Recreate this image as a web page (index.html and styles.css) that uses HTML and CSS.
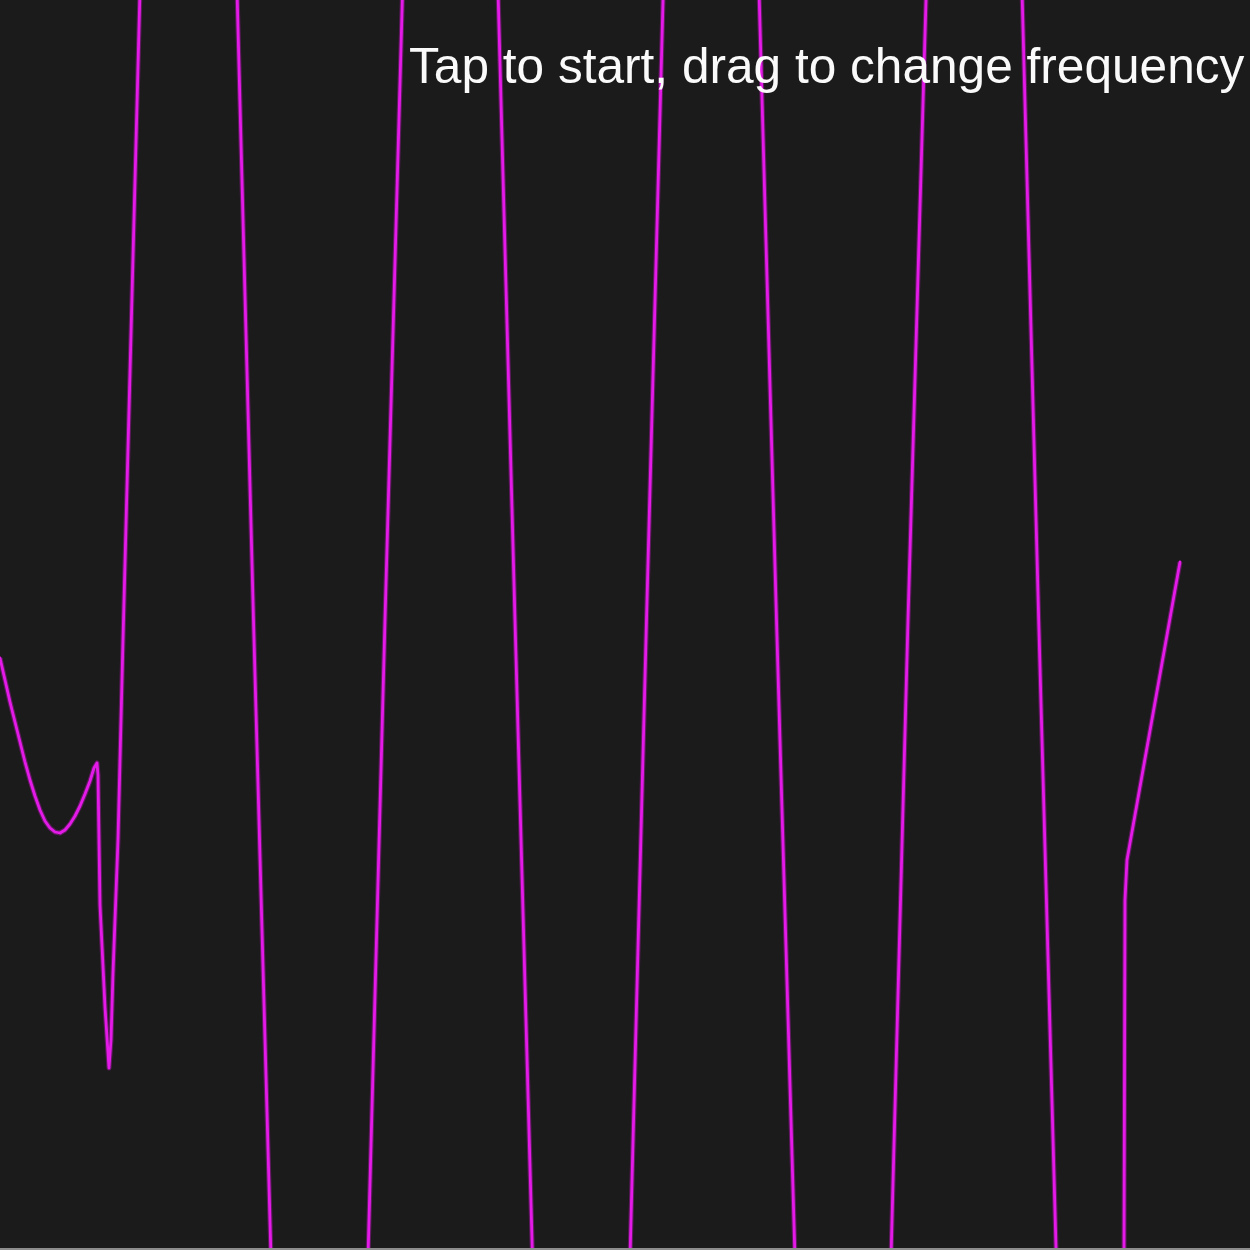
FILE: index.html
```html
<!DOCTYPE html>
<html lang="en">

<head>
	<meta charset="UTF-8">
	<meta name="viewport" content="width=device-width, initial-scale=1.0">
	<title>Oscillator</title>
	<link rel="stylesheet" href="styles.css">
</head>

<body>
	<div class="scope">
		<svg class="scope-trace" viewBox="0 0 1250 1248" preserveAspectRatio="none">
			<defs>
				<!-- captured waveform, clipped at the canvas edges -->
				<path id="wave" d="M0,658 L5,680 L10,702 L15,722 L20,742 L25,762 L30,780 L35,796 L40,810
					L45,821 L50,828 L55,832 L60,833 L65,830 L70,824 L75,816 L80,806 L85,794 L90,781 L94,768
					L97,763 L98,775 L100,905 L105,1007 L109,1068 L111,1040 L113,973
					L118,840 L123,640 L140,-10 L237,-10 L253.5,620 L271,1258 L368,1258 L385,620 L402.6,-10
					L498,-10 L515,620 L532.5,1258 L630,1258 L646.5,620 L663.3,-10 L759,-10 L776.5,620
					L795,1258 L891,1258 L908,620 L926.3,-10 L1022,-10 L1038.7,620 L1056.3,1258 L1124,1258
					L1125,900 L1127,860 L1180,562" />
			</defs>
			<use href="#wave" class="trace-glow" />
			<use href="#wave" class="trace-line" />
		</svg>
		<p class="hint">Tap to start, drag to change frequency</p>
	</div>
</body>

</html>
```

FILE: styles.css
```css
/* Base reset */
* {
	margin: 0;
	padding: 0;
	box-sizing: border-box;
}

body {
	background: #1b1b1b;
	font-family: 'Liberation Sans', Helvetica, Arial, sans-serif;
	overflow: hidden;
}

.scope {
	position: relative;
	width: 1250px;
	border-bottom: 2px solid #8e8e8e;
}

.scope-trace {
	display: block;
	width: 1250px;
	height: 1248px;
}

.trace-glow {
	fill: none;
	stroke: rgba(200, 20, 200, 0.4);
	stroke-width: 5;
	stroke-linejoin: round;
}

.trace-line {
	fill: none;
	stroke: #e41ae8;
	stroke-width: 2.8;
	stroke-linejoin: round;
	stroke-linecap: round;
}

.hint {
	position: absolute;
	top: 42px;
	left: 409px;
	font-size: 49.6px;
	line-height: 1;
	color: #fafafa;
	white-space: nowrap;
}
```
